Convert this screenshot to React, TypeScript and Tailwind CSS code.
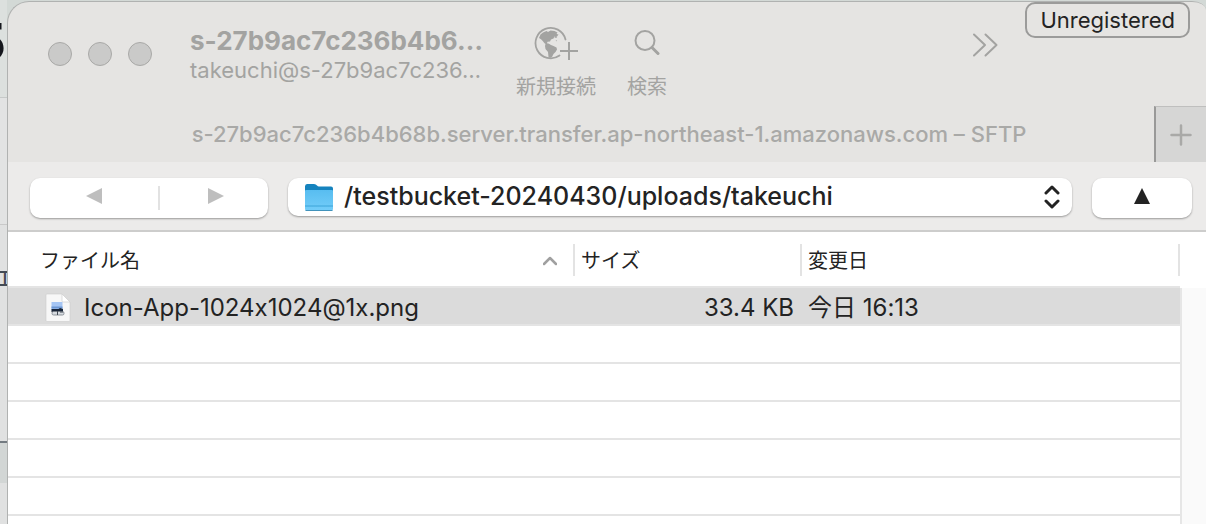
import { ReactNode } from "react";

const files = [
  { name: "Icon-App-1024x1024@1x.png", size: "33.4 KB", modified: "今日 16:13" },
];

const emptyRows = [1, 2, 3, 4, 5, 6];

function GlobePlus() {
  return (
    <svg width="46" height="36" viewBox="0 0 46 36" fill="none" aria-hidden="true">
      <path
        d="M32.500 13.5A15.200 15.200 0 1 0 26.500 29.5"
        stroke="currentColor"
        strokeWidth="1.8"
        strokeLinecap="round"
      />
      <path
        d="M6 12 7.500 8.500l2.500-2L13.500 5l1.500 1 2.500-1.500 4 .5 3 1.500-1 1.500 2 .5-1.500 2-2.500 0-1 2-2.500 1-1 2-2.500.3-.5 1.500 2 1.200 1 1.200-2.500-.5-3-2-2-2.500-1.500-1.500Z"
        fill="currentColor"
      />
      <path
        d="M12.500 18 15.500 17.500l2.500 1.500 2.500 1 3 1.500.5 2-1.500 2.500-2 2-1.500 3L17 32l-1.500-1-.5-5-2.500-3-.5-3Z"
        fill="currentColor"
      />
      <path d="m22 10 2 .5-.5 1.500-2-.5ZM22.500 14l1.500.5v1Z" fill="currentColor" />
      <path d="M36 16v18M27 25h18" stroke="currentColor" strokeWidth="2" />
    </svg>
  );
}

function Magnifier() {
  return (
    <svg width="26" height="36" viewBox="0 0 26 36" fill="none" aria-hidden="true">
      <circle cx="11" cy="14.500" r="9.500" stroke="currentColor" strokeWidth="2" />
      <path d="m18 21.500 6 6" stroke="currentColor" strokeWidth="3" strokeLinecap="round" />
    </svg>
  );
}

function Folder() {
  return (
    <svg width="30" height="30" viewBox="0 0 30 30" aria-hidden="true">
      <defs>
        <linearGradient id="folder" x1="0" y1="0" x2="0" y2="1">
          <stop offset="0" stopColor="#58bdf0" />
          <stop offset="1" stopColor="#73cdf9" />
        </linearGradient>
      </defs>
      <path d="M1 3.500Q1 1 3 1h7q2 0 3 1.500.7 1 2 1h12q2 0 2 2V12H1Z" fill="#1583be" />
      <path d="M1 8q0-1 1-1h26q1 0 1 1v18q0 1.500-1.500 1.500h-25Q1 27.500 1 26Z" fill="url(#folder)" />
      <path d="M1 23h28" stroke="#3da4d8" strokeWidth="1" />
      <path d="M1.500 27.500h27" stroke="#4192bb" strokeWidth="1" />
    </svg>
  );
}

function ImageFile() {
  return (
    <svg width="26" height="30" viewBox="0 0 26 30" className="shrink-0" aria-hidden="true">
      <path d="M1 2q0-1 1-1h15l8 8v18.500q0 1-1 1H2q-1 0-1-1Z" fill="#f7f7f7" stroke="#cdcdcd" strokeWidth=".6" />
      <path d="M17 1v7q0 1 1 1h7Z" fill="#fff" stroke="#cfcfcf" strokeWidth=".7" />
      <path d="M6.500 9h11v8h-11Z" fill="#a5c5f3" />
      <path d="M6.500 13.500h11v2h-11Z" fill="#6c97d3" />
      <path d="M6.500 16h7l1.500-1 3 1v3h-11.500Z" fill="#182437" />
      <rect x="7" y="18.500" width="12" height="3.500" rx="1.500" fill="#d7dbe0" stroke="#777e87" strokeWidth=".8" />
      <path d="M12.500 18v4M15 19h3" stroke="#454c55" strokeWidth="1" />
    </svg>
  );
}

function ToolbarButton({ label, children }: { label: string; children: ReactNode }) {
  return (
    <button className="flex flex-col items-center gap-[11px]">
      {children}
      <span className="text-xl leading-7">{label}</span>
    </button>
  );
}

function Backdrop() {
  return (
    <div className="flex w-[7px] shrink-0 flex-col overflow-hidden bg-[#e0e1e1] text-[#15171d]">
      <div className="flex h-[98px] justify-end border-b border-[#c6c9c8] bg-[#dce0de] pr-px">
        <span className="pt-[13px] text-[52px] leading-[60px] font-bold">5</span>
      </div>
      <div className="h-[127px] border-b border-[#c9c9c9] bg-[#e2e3e3]" />
      <div className="flex h-[218px] justify-end border-b-2 border-[#737b81] pt-10">
        <span className="-mr-2 text-xl font-medium text-[#434b55]">工</span>
      </div>
      <div className="h-10 bg-[#d2d6d5]" />
    </div>
  );
}

function TitleBar() {
  return (
    <header className="relative flex h-[104px] items-start pl-10 text-[#a3a3a1]">
      <div className="flex gap-4 pt-10">
        <button aria-label="Close" className="size-6 rounded-full border border-[#a9a9a7] bg-[#cacac9]" />
        <button aria-label="Minimize" className="size-6 rounded-full border border-[#a9a9a7] bg-[#cacac9]" />
        <button aria-label="Zoom" className="size-6 rounded-full border border-[#a9a9a7] bg-[#cacac9]" />
      </div>
      <div className="ml-[38px] w-[300px] shrink-0 pt-[23px] whitespace-nowrap">
        <h1 className="text-[26px] leading-8 font-bold">s-27b9ac7c236b4b6…</h1>
        <p className="text-[22px] leading-[26px]">takeuchi@s-27b9ac7c236…</p>
      </div>
      <div className="ml-[26px] flex gap-[31px] pt-6">
        <ToolbarButton label="新規接続">
          <GlobePlus />
        </ToolbarButton>
        <ToolbarButton label="検索">
          <Magnifier />
        </ToolbarButton>
      </div>
      <button aria-label="More" className="mr-[208px] ml-auto pt-[31px]">
        <svg width="26" height="24" viewBox="0 0 26 24" fill="none" stroke="currentColor" strokeWidth="2" strokeLinecap="round" strokeLinejoin="round">
          <path d="m2 1.500 11 10.500L2 22.500M13.500 1.500 24.500 12 13.500 22.500" />
        </svg>
      </button>
      <span className="absolute top-0 right-4 rounded-[10px] border-2 border-[#9b9b9a] px-[13px] text-[22px] leading-8 text-[#232323]">
        Unregistered
      </span>
    </header>
  );
}

function TabBar() {
  return (
    <div className="flex h-14 text-[#a9a9a7]">
      <div className="flex flex-1 items-center justify-center pl-14 text-[22px] font-medium whitespace-nowrap">
        s-27b9ac7c236b4b68b.server.transfer.ap-northeast-1.amazonaws.com – SFTP
      </div>
      <button
        aria-label="New tab"
        className="flex w-[52px] items-center justify-center border-t border-l-2 border-t-[#bfbfbe] border-l-[#999998] bg-[#d6d6d5]"
      >
        <svg width="22" height="22" viewBox="0 0 22 22" stroke="currentColor" strokeWidth="2.500" strokeLinecap="round">
          <path d="M11 1.500v19M1.500 11h19" />
        </svg>
      </button>
    </div>
  );
}

function NavBar() {
  return (
    <nav className="flex h-[70px] items-start border-b-2 border-[#cdcdcc] bg-[#ecebea] pt-4 pr-[14px] pl-[22px]">
      <div className="flex h-10 w-[238px] shrink-0 items-center rounded-[10px] bg-white text-[#bebebe] shadow-[0_1px_2px_rgba(0,0,0,0.35)]">
        <button aria-label="Back" className="flex w-32 justify-center pb-1">
          <svg width="16" height="16" viewBox="0 0 16 16" fill="currentColor">
            <path d="M0 8 16 0v16Z" />
          </svg>
        </button>
        <div className="h-6 w-0.5 bg-[#e2e2e2]" />
        <button aria-label="Forward" className="flex flex-1 justify-center pb-1 pl-1">
          <svg width="16" height="16" viewBox="0 0 16 16" fill="currentColor">
            <path d="M16 8 0 0v16Z" />
          </svg>
        </button>
      </div>
      <div className="relative ml-5 h-[38px] flex-1 rounded-[10px] bg-white text-[#232323] shadow-[0_1px_2px_rgba(0,0,0,0.35)]">
        <select aria-label="Path" className="size-full appearance-none pl-14 text-[25px] font-medium">
          <option>/testbucket-20240430/uploads/takeuchi</option>
        </select>
        <div className="pointer-events-none absolute inset-y-0 left-4 flex items-center pt-0.5">
          <Folder />
        </div>
        <div className="pointer-events-none absolute inset-y-0 right-3 flex items-center">
          <svg width="16" height="24" viewBox="0 0 16 24" fill="none" stroke="currentColor" strokeWidth="3" strokeLinecap="round" strokeLinejoin="round">
            <path d="m2 8 6-6 6 6M2 16l6 6 6-6" />
          </svg>
        </div>
      </div>
      <button
        aria-label="Parent folder"
        className="ml-5 flex h-10 w-[100px] shrink-0 items-center justify-center rounded-[10px] bg-white pb-1 text-[#232323] shadow-[0_1px_2px_rgba(0,0,0,0.35)]"
      >
        <svg width="16" height="16" viewBox="0 0 16 16" fill="currentColor">
          <path d="M8 0 16 16H0Z" />
        </svg>
      </button>
    </nav>
  );
}

function HeaderCell({ label }: { label: string }) {
  return (
    <th scope="col" className="border-b-2 border-[#e4e4e4] p-0 pt-0.5 text-left font-normal">
      <div className="flex h-8 items-center border-r-2 border-[#e3e3e3] pt-0.5 pl-1.5">{label}</div>
    </th>
  );
}

function FileTable() {
  return (
    <div className="flex flex-1 overflow-hidden bg-white text-[#232323]">
      <table className="flex-1 table-fixed border-separate border-spacing-0 whitespace-nowrap">
        <colgroup>
          <col className="w-[567px]" />
          <col className="w-[227px]" />
          <col />
        </colgroup>
        <thead>
          <tr className="h-14 text-xl">
            <th scope="col" className="border-b-2 border-[#e4e4e4] p-0 pt-0.5 text-left font-normal">
              <div className="flex h-8 items-center justify-between border-r-2 border-[#e3e3e3] pt-0.5 pr-4 pl-8">
                ファイル名
                <svg width="14" height="10" viewBox="0 0 14 10" fill="none" stroke="#a0a0a0" strokeWidth="2.500" strokeLinecap="round" strokeLinejoin="round">
                  <path d="m1 8 6-6 6 6" />
                </svg>
              </div>
            </th>
            <HeaderCell label="サイズ" />
            <HeaderCell label="変更日" />
          </tr>
        </thead>
        <tbody className="text-2xl">
          {files.map((file) => (
            <tr key={file.name} className="h-[38px] bg-[#dbdbdb]">
              <td className="border-b-2 border-[#e4e4e4] p-0">
                <div className="flex items-center gap-[13px] pt-1 pl-[37px] leading-8">
                  <ImageFile />
                  {file.name}
                </div>
              </td>
              <td className="border-b-2 border-[#e4e4e4] p-0 pt-1 pr-2 text-right leading-8">{file.size}</td>
              <td className="border-b-2 border-[#e4e4e4] p-0 pt-1 pl-1.5 leading-8">{file.modified}</td>
            </tr>
          ))}
          {emptyRows.map((row) => (
            <tr key={row} className="h-[38px]">
              <td colSpan={3} className="border-b-2 border-[#e4e4e4] p-0" />
            </tr>
          ))}
        </tbody>
      </table>
      <div className="mt-14 w-[26px] shrink-0 border-l-2 border-[#e6e6e6] bg-[#fafafa]" />
    </div>
  );
}

export default function App() {
  return (
    <div className="flex h-screen overflow-hidden bg-[#d3d9d6] font-[Inter,'Noto_Sans_CJK_JP',sans-serif] [font-feature-settings:'calt'_0]">
      <Backdrop />
      <main className="mt-px flex min-w-0 flex-1 flex-col overflow-hidden rounded-tl-[22px] rounded-tr-[14px_9px] border-t border-l border-[#b0b2b1] bg-[#e5e4e2]">
        <TitleBar />
        <TabBar />
        <NavBar />
        <FileTable />
      </main>
    </div>
  );
}
